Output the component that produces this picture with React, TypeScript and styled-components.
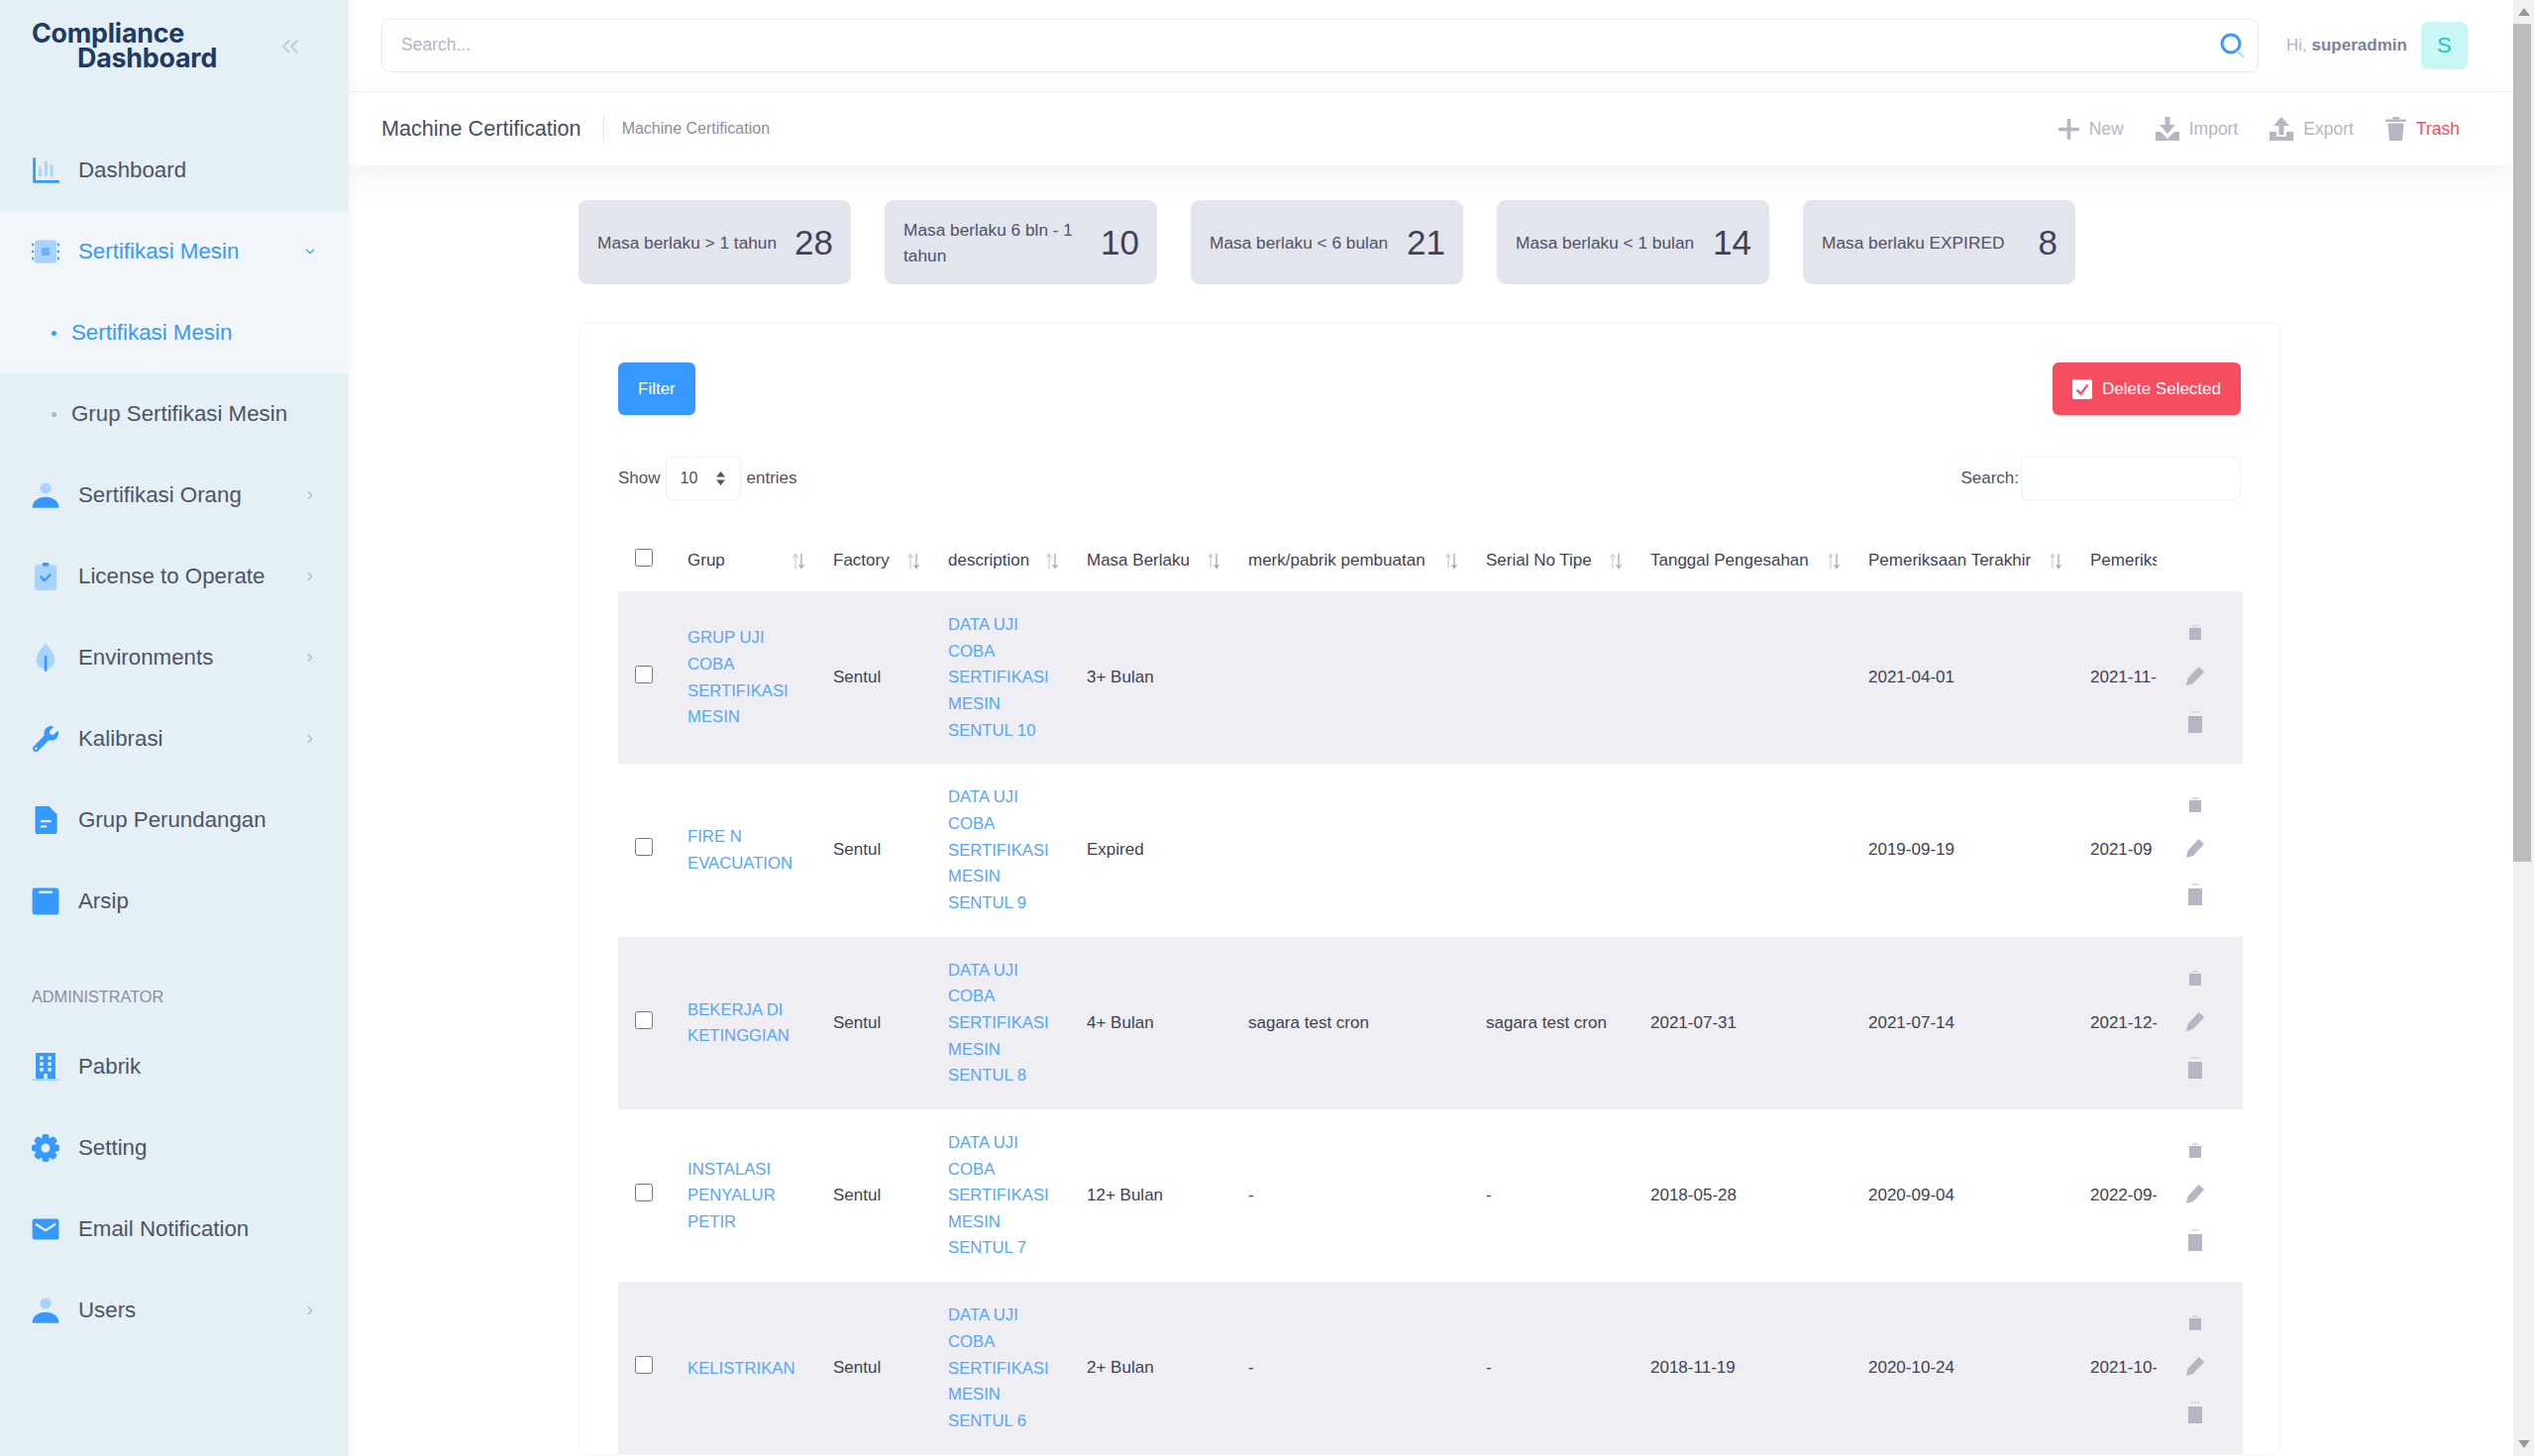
import styled, { createGlobalStyle } from "styled-components";
import { ChevronDown, ChevronRight, ChevronsLeft } from "lucide-react";
import { FaWrench } from "react-icons/fa";
import type { ReactNode } from "react";

const BLUE = "#3699ff";
const LIGHT = "#a9d3ff";
const MUTED = "#b5b5c3";

const GlobalStyle = createGlobalStyle`
  html, body {
    margin: 0;
    padding: 0;
    height: 100%;
    overflow: hidden;
    background: #fff;
    font-family: "Liberation Sans", Arial, sans-serif;
    color: #3f4254;
  }
  * { box-sizing: border-box; }
`;

const Svg = ({ children }: { children: ReactNode }) => (
  <svg width="28" height="28" viewBox="0 0 24 24" fill={BLUE}>
    {children}
  </svg>
);

const ChartIcon = () => (
  <Svg>
    <path d="M1 1h2.4v19.6H24V23H1z" />
    <rect x="6" y="9" width="2.6" height="8.5" rx="1" fill={LIGHT} />
    <rect x="11" y="4" width="2.6" height="13.5" rx="1" fill={LIGHT} />
    <rect x="16" y="7" width="2.6" height="10.5" rx="1" fill={LIGHT} />
  </Svg>
);

const ChipIcon = () => (
  <Svg>
    <rect x="2.5" y="2" width="19" height="20" rx="3" fill={LIGHT} />
    <rect x="8.5" y="8.5" width="7" height="7" rx="1" fill="#69b3ff" />
    {[5, 11, 17].map((y) => (
      <g key={y}>
        <rect x="0" y={y} width="1.8" height="2" rx="0.5" />
        <rect x="22.2" y={y} width="1.8" height="2" rx="0.5" />
      </g>
    ))}
  </Svg>
);

const PersonIcon = () => (
  <Svg>
    <circle cx="12" cy="6" r="4.8" fill={LIGHT} />
    <path d="M0.5 23c0-6 5-9.5 11.5-9.5S23.500 17 23.500 23z" />
  </Svg>
);

const ClipboardIcon = () => (
  <Svg>
    <rect x="2.500" y="2" width="19" height="22" rx="2.500" fill={LIGHT} />
    <rect x="9" y="0" width="6" height="3" rx="1.500" />
    <path d="M8 12.500l3 3 5-5" fill="none" stroke={BLUE} strokeWidth="2" strokeLinecap="round" strokeLinejoin="round" />
  </Svg>
);

const LeafIcon = () => (
  <Svg>
    <path d="M12 0C8 4 4 9 4 14a8 8 0 0 0 16 0c0-5-4-10-8-14z" fill={LIGHT} />
    <rect x="11" y="10" width="2.200" height="14" rx="1.100" />
  </Svg>
);

const DocIcon = () => (
  <Svg>
    <path d="M3 0h12l7 7v15a2 2 0 0 1-2 2H5a2 2 0 0 1-2-2z" />
    <rect x="7.500" y="12" width="9.500" height="2" rx="0.800" fill="#e4f0f6" />
    <rect x="7.500" y="16.500" width="5.500" height="2" rx="0.800" fill="#e4f0f6" />
  </Svg>
);

const ArchiveIcon = () => (
  <Svg>
    <rect x="0.500" y="0.500" width="23" height="23" rx="2" />
    <rect x="6" y="3" width="12" height="2.200" rx="1" fill="#e4f0f6" />
  </Svg>
);

const BuildingIcon = () => (
  <Svg>
    <rect x="3.500" y="0" width="17" height="22.500" rx="0.500" />
    <rect x="0.500" y="22.500" width="23" height="1.500" fill={LIGHT} />
    {[3, 8, 13].map((y) => (
      <g key={y} fill="#e4f0f6">
        <rect x="7" y={y} width="3" height="3" />
        <rect x="14" y={y} width="3" height="3" />
      </g>
    ))}
    <rect x="10.500" y="18" width="3" height="4.500" fill="#e4f0f6" />
  </Svg>
);

const GearIcon = () => (
  <Svg>
    {[0, 45, 90, 135].map((deg) => (
      <rect key={deg} x="9" y="0" width="6" height="24" rx="2" transform={`rotate(${deg} 12 12)`} />
    ))}
    <circle cx="12" cy="12" r="9" />
    <circle cx="12" cy="12" r="3.800" fill="#e4f0f6" />
  </Svg>
);

const MailIcon = () => (
  <Svg>
    <rect x="0.500" y="3" width="23" height="18" rx="2" />
    <path d="M4 8l8 5 8-5" fill="none" stroke="#e4f0f6" strokeWidth="2" strokeLinecap="round" strokeLinejoin="round" />
  </Svg>
);

const Sidebar = styled.aside`
  flex: 0 0 352px;
  height: 100vh;
  background: #e4f0f6;
  box-shadow: 2px 0 8px rgba(82, 63, 105, 0.06);
  position: relative;
  z-index: 2;
`;

const Brand = styled.div`
  height: 131px;
  padding: 21px 45px 0 32px;
  display: flex;
  justify-content: space-between;
`;

const Logo = styled.div`
  font-family: Inter, "Open Sans", sans-serif;
  font-weight: 700;
  font-size: 26.800px;
  line-height: 25px;
  letter-spacing: -0.200px;
  color: #1f3a63;
  span {
    display: block;
  }
  span + span {
    padding-left: 46px;
  }
`;

const Collapse = styled.div`
  color: #c4c6d2;
  padding-top: 12px;
  display: flex;
`;

const NavGroup = styled.div<{ $open?: boolean }>`
  background: ${(p) => (p.$open ? "#f2f6fa" : "transparent")};
`;

const NavRow = styled.div<{ $active?: boolean }>`
  height: 82px;
  padding: 0 32px;
  display: flex;
  align-items: center;
  font-size: 22.300px;
  color: ${(p) => (p.$active ? BLUE : "#4f5365")};
`;

const NavIcon = styled.span`
  flex: 0 0 28px;
  height: 28px;
  margin-right: 19px;
  display: flex;
  align-items: center;
  justify-content: center;
  color: ${BLUE};
`;

const NavLabel = styled.span`
  flex: 1;
`;

const NavArrow = styled.span<{ $active?: boolean }>`
  display: flex;
  color: ${(p) => (p.$active ? BLUE : MUTED)};
`;

const SubRow = styled(NavRow)`
  padding-left: 52px;
`;

const Dot = styled.span<{ $active?: boolean }>`
  width: 5px;
  height: 5px;
  border-radius: 50%;
  margin-right: 15px;
  background: ${(p) => (p.$active ? BLUE : MUTED)};
`;

const SectionTitle = styled.div`
  height: 85px;
  padding: 46px 32px 0;
  font-size: 16.300px;
  line-height: 18px;
  color: #8a8fa3;
`;

const Main = styled.main`
  flex: 1;
  min-width: 0;
  height: 100vh;
  overflow: hidden;
  background: #fff;
`;

const TopBar = styled.header`
  height: 93px;
  padding: 0 0 0 33px;
  display: flex;
  align-items: center;
  border-bottom: 1px solid #f3f3f7;
`;

const SearchBox = styled.div`
  width: 1895px;
  height: 54px;
  margin-top: -1px;
  padding: 0 14px 0 17px;
  display: flex;
  align-items: center;
  border: 1px solid #e7e9ef;
  border-radius: 8px;
`;

const SearchInput = styled.input`
  flex: 1;
  border: 0;
  outline: 0;
  font: 17.500px "Liberation Sans", Arial, sans-serif;
  color: #3f4254;
  &::placeholder {
    color: #b5b5c3;
  }
`;

const Greeting = styled.div`
  margin-left: 28px;
  font-size: 17px;
  color: ${MUTED};
  white-space: nowrap;
  b {
    color: #7e8299;
  }
`;

const Avatar = styled.div`
  width: 47px;
  height: 48px;
  margin-left: 14px;
  border-radius: 7px;
  background: #c9f7f5;
  color: #1bc5bd;
  font-size: 22px;
  display: flex;
  align-items: center;
  justify-content: center;
`;

const SubHeader = styled.div`
  height: 74px;
  padding: 0 54px 0 33px;
  display: flex;
  align-items: center;
  background: #fff;
  box-shadow: 0 10px 30px rgba(82, 63, 105, 0.08);
  position: relative;
  z-index: 1;
`;

const PageTitle = styled.h1`
  margin: 0;
  font-size: 21.600px;
  font-weight: 400;
  color: #464e5f;
`;

const Crumb = styled.span`
  margin-left: 22px;
  padding-left: 18px;
  height: 30px;
  line-height: 30px;
  border-left: 1px solid #e8e8ee;
  font-size: 16px;
  color: #8a8d9f;
`;

const Tools = styled.div`
  margin-left: auto;
  display: flex;
  align-items: center;
  gap: 32px;
`;

const Tool = styled.span<{ $danger?: boolean }>`
  display: flex;
  align-items: center;
  gap: 10px;
  font-size: 17.500px;
  color: ${MUTED};
  em {
    font-style: normal;
    color: ${(p) => (p.$danger ? "#f64e60" : MUTED)};
  }
`;

const Content = styled.div`
  padding: 35px 235px 0 232px;
`;

const Stats = styled.div`
  display: flex;
  gap: 34px;
`;

const StatCard = styled.div`
  flex: 0 0 275px;
  height: 85px;
  padding: 0 18px 0 19px;
  display: flex;
  align-items: center;
  gap: 12px;
  border-radius: 9px;
  background: #e3e5ee;
`;

const StatLabel = styled.span`
  flex: 1;
  font-size: 17.300px;
  line-height: 26px;
  color: #4f5365;
`;

const StatValue = styled.span`
  font-size: 35px;
  color: #3f4254;
`;

const Card = styled.section`
  margin-top: 38px;
  padding: 40px 39px 0;
  border: 1px solid #f3f3f8;
  border-radius: 8px;
  background: #fff;
`;

const ButtonRow = styled.div`
  display: flex;
  justify-content: space-between;
`;

const Button = styled.button<{ $danger?: boolean }>`
  height: 53px;
  padding: 0 20px;
  display: flex;
  align-items: center;
  gap: 10px;
  border: 0;
  border-radius: 6px;
  font: 17px "Liberation Sans", Arial, sans-serif;
  color: #fff;
  background: ${(p) => (p.$danger ? "#f64e60" : BLUE)};
`;

const ListBar = styled.div`
  margin-top: 42px;
  margin-bottom: 26px;
  display: flex;
  align-items: center;
  justify-content: space-between;
  font-size: 17px;
  color: #4f5365;
`;

const ListGroup = styled.div`
  display: flex;
  align-items: center;
`;

const EntrySelect = styled.div`
  width: 76px;
  height: 44px;
  margin: 0 6px 0 5px;
  padding: 0 14px;
  display: flex;
  align-items: center;
  justify-content: space-between;
  border: 1px solid #f0f0f5;
  border-radius: 6px;
  font-size: 16px;
`;

const FilterInput = styled.input`
  width: 222px;
  height: 44px;
  margin-left: 2px;
  border: 1px solid #f0f0f5;
  border-radius: 6px;
  outline: 0;
`;

const Table = styled.table`
  width: 1640px;
  table-layout: fixed;
  border-collapse: collapse;
  font-size: 17px;
`;

const Th = styled.th`
  height: 66px;
  padding: 4px 0 0;
  font-weight: 400;
  text-align: left;
  white-space: nowrap;
  overflow: hidden;
  color: #3f4254;
`;

const ThInner = styled.div`
  padding-right: 28px;
  display: flex;
  align-items: center;
  justify-content: space-between;
`;

const Tr = styled.tr<{ $shade: boolean }>`
  background: ${(p) => (p.$shade ? "#eeeef3" : "#fff")};
`;

const Td = styled.td`
  height: 174.300px;
  padding: 0;
  vertical-align: middle;
`;

const LinkTd = styled(Td)`
  padding-top: 1px;
  font-size: 16.700px;
  line-height: 26.600px;
  color: #55a6ff;
`;

const GrupTd = styled(LinkTd)`
  padding-right: 27px;
`;

const DescTd = styled(LinkTd)`
  padding-right: 20px;
`;

const ClipTd = styled(Td)`
  white-space: nowrap;
  overflow: hidden;
`;

const Check = styled.input`
  display: block;
  width: 18px;
  height: 18px;
  margin: 0 0 6px 17px;
`;

const RowActions = styled.div`
  width: 77px;
  padding: 3px 0 0 1px;
  display: flex;
  flex-direction: column;
  align-items: center;
  gap: 26px;
`;

const Scrollbar = styled.div`
  flex: 0 0 21px;
  height: 100vh;
  display: flex;
  flex-direction: column;
  background: #f1f1f1;
`;

const ScrollArrow = styled.div`
  height: 24px;
  display: flex;
  align-items: center;
  justify-content: center;
`;

const ScrollTrack = styled.div`
  flex: 1;
`;

const ScrollThumb = styled.div`
  height: 846px;
  margin-right: 3px;
  background: #bcbcbc;
`;

const Shell = styled.div`
  display: flex;
  height: 100vh;
  overflow: hidden;
`;

const SortIcon = () => (
  <svg width="14" height="17" viewBox="0 0 14 17" fill="none" strokeWidth="1.200">
    <path d="M4 16V2M1.500 5L4 1.500 6.500 5" stroke="#c9cad6" />
    <path d="M10 1v14M7.500 12L10 15.500 12.500 12" stroke="#9d9eae" />
  </svg>
);

const StepIcon = () => (
  <svg width="11" height="16" viewBox="0 0 11 16" fill="#4f5365">
    <path d="M5.500 1L10 6.500H1zM5.500 15L1 9.500h9z" />
  </svg>
);

const PlusIcon = () => (
  <svg width="21" height="21" viewBox="0 0 21 21" fill={MUTED}>
    <rect x="8.700" y="0" width="3.600" height="21" rx="1.200" />
    <rect x="0" y="8.700" width="21" height="3.600" rx="1.200" />
  </svg>
);

const ImportIcon = () => (
  <svg width="24" height="24" viewBox="0 0 24 24" fill={MUTED}>
    <path d="M9.500 0h5v8H20l-8 9-8-9h5.500z" />
    <path d="M0 15h5l7 7 7-7h5v9H0z" />
  </svg>
);

const ExportIcon = () => (
  <svg width="24" height="24" viewBox="0 0 24 24" fill={MUTED}>
    <path d="M12 0l8 9h-5.500v9h-5V9H4z" />
    <path d="M0 15h7v5h10v-5h7v9H0z" />
  </svg>
);

const TrashIcon = () => (
  <svg width="21" height="24" viewBox="0 0 21 24" fill={MUTED}>
    <rect x="0" y="2.500" width="21" height="2.500" rx="1" />
    <rect x="7" y="0" width="7" height="2.500" rx="1" />
    <path d="M2.500 6.500h16L17 24H4z" />
  </svg>
);

const RowTrashIcon = () => (
  <svg width="14" height="22" viewBox="0 0 14 22" fill={MUTED}>
    <rect x="3" y="0" width="8" height="1.500" fill="#d6d6df" />
    <rect x="0" y="5" width="14" height="17" />
  </svg>
);

const SmallDocIcon = () => (
  <svg width="12" height="15" viewBox="0 0 12 15" fill={MUTED}>
    <rect x="0" y="3" width="12" height="12" />
    <rect x="3" y="0" width="6" height="2" fill="#d6d6df" />
  </svg>
);

const PencilIcon = () => (
  <svg width="20" height="20" viewBox="0 0 20 20" fill={MUTED}>
    <path d="M13.500 1l5.500 5-11 12L1 20l1.500-7z" />
  </svg>
);

const SearchGlyph = () => (
  <svg width="24" height="26" viewBox="0 0 24 26" fill="none">
    <circle cx="11" cy="11" r="9" stroke={BLUE} strokeWidth="3" />
    <path d="M18 19l5 5" stroke="#bcdcff" strokeWidth="2.500" strokeLinecap="round" />
  </svg>
);

const CheckedBox = () => (
  <svg width="20" height="20" viewBox="0 0 20 20">
    <rect width="20" height="20" rx="2" fill="#fff" />
    <path d="M4.500 10.500l4 4 7-9" fill="none" stroke="#f64e60" strokeWidth="2.200" />
  </svg>
);

const menu: { label: string; icon: ReactNode; arrow?: boolean }[] = [
  { label: "Sertifikasi Orang", icon: <PersonIcon />, arrow: true },
  { label: "License to Operate", icon: <ClipboardIcon />, arrow: true },
  { label: "Environments", icon: <LeafIcon />, arrow: true },
  { label: "Kalibrasi", icon: <FaWrench size={26} />, arrow: true },
  { label: "Grup Perundangan", icon: <DocIcon /> },
  { label: "Arsip", icon: <ArchiveIcon /> },
];

const adminMenu: { label: string; icon: ReactNode; arrow?: boolean }[] = [
  { label: "Pabrik", icon: <BuildingIcon /> },
  { label: "Setting", icon: <GearIcon /> },
  { label: "Email Notification", icon: <MailIcon /> },
  { label: "Users", icon: <PersonIcon />, arrow: true },
];

const stats = [
  { label: "Masa berlaku > 1 tahun", value: 28 },
  { label: "Masa berlaku 6 bln - 1 tahun", value: 10 },
  { label: "Masa berlaku < 6 bulan", value: 21 },
  { label: "Masa berlaku < 1 bulan", value: 14 },
  { label: "Masa berlaku EXPIRED", value: 8 },
];

const columns = [
  { title: "Grup", width: 147 },
  { title: "Factory", width: 116 },
  { title: "description", width: 140 },
  { title: "Masa Berlaku", width: 163 },
  { title: "merk/pabrik pembuatan", width: 240 },
  { title: "Serial No Tipe", width: 166 },
  { title: "Tanggal Pengesahan", width: 220 },
  { title: "Pemeriksaan Terakhir", width: 224 },
];

const rows = [
  { grup: "GRUP UJI COBA SERTIFIKASI MESIN", no: 10, masa: "3+ Bulan", merk: "", serial: "", sah: "", last: "2021-04-01", next: "2021-11-" },
  { grup: "FIRE N EVACUATION", no: 9, masa: "Expired", merk: "", serial: "", sah: "", last: "2019-09-19", next: "2021-09" },
  { grup: "BEKERJA DI KETINGGIAN", no: 8, masa: "4+ Bulan", merk: "sagara test cron", serial: "sagara test cron", sah: "2021-07-31", last: "2021-07-14", next: "2021-12-" },
  { grup: "INSTALASI PENYALUR PETIR", no: 7, masa: "12+ Bulan", merk: "-", serial: "-", sah: "2018-05-28", last: "2020-09-04", next: "2022-09-" },
  { grup: "KELISTRIKAN", no: 6, masa: "2+ Bulan", merk: "-", serial: "-", sah: "2018-11-19", last: "2020-10-24", next: "2021-10-" },
];

const MenuRow = ({ label, icon, arrow }: { label: string; icon: ReactNode; arrow?: boolean }) => (
  <NavRow>
    <NavIcon>{icon}</NavIcon>
    <NavLabel>{label}</NavLabel>
    {arrow && (
      <NavArrow>
        <ChevronRight size={14} />
      </NavArrow>
    )}
  </NavRow>
);

const App = () => {
  return (
    <Shell>
      <GlobalStyle />
      <Sidebar>
        <Brand>
          <Logo>
            <span>Compliance</span>
            <span>Dashboard</span>
          </Logo>
          <Collapse>
            <ChevronsLeft size={28} strokeWidth={1.500} />
          </Collapse>
        </Brand>
        <MenuRow label="Dashboard" icon={<ChartIcon />} />
        <NavGroup $open>
          <NavRow $active>
            <NavIcon>
              <ChipIcon />
            </NavIcon>
            <NavLabel>Sertifikasi Mesin</NavLabel>
            <NavArrow $active>
              <ChevronDown size={14} />
            </NavArrow>
          </NavRow>
          <SubRow $active>
            <Dot $active />
            Sertifikasi Mesin
          </SubRow>
        </NavGroup>
        <SubRow>
          <Dot />
          Grup Sertifikasi Mesin
        </SubRow>
        {menu.map((item) => (
          <MenuRow key={item.label} {...item} />
        ))}
        <SectionTitle>ADMINISTRATOR</SectionTitle>
        {adminMenu.map((item) => (
          <MenuRow key={item.label} {...item} />
        ))}
      </Sidebar>

      <Main>
        <TopBar>
          <SearchBox>
            <SearchInput placeholder="Search..." />
            <SearchGlyph />
          </SearchBox>
          <Greeting>
            Hi, <b>superadmin</b>
          </Greeting>
          <Avatar>S</Avatar>
        </TopBar>

        <SubHeader>
          <PageTitle>Machine Certification</PageTitle>
          <Crumb>Machine Certification</Crumb>
          <Tools>
            <Tool>
              <PlusIcon />
              <em>New</em>
            </Tool>
            <Tool>
              <ImportIcon />
              <em>Import</em>
            </Tool>
            <Tool>
              <ExportIcon />
              <em>Export</em>
            </Tool>
            <Tool $danger>
              <TrashIcon />
              <em>Trash</em>
            </Tool>
          </Tools>
        </SubHeader>

        <Content>
          <Stats>
            {stats.map((s) => (
              <StatCard key={s.label}>
                <StatLabel>{s.label}</StatLabel>
                <StatValue>{s.value}</StatValue>
              </StatCard>
            ))}
          </Stats>

          <Card>
            <ButtonRow>
              <Button>Filter</Button>
              <Button $danger>
                <CheckedBox />
                Delete Selected
              </Button>
            </ButtonRow>

            <ListBar>
              <ListGroup>
                Show
                <EntrySelect>
                  10
                  <StepIcon />
                </EntrySelect>
                entries
              </ListGroup>
              <ListGroup>
                Search:
                <FilterInput />
              </ListGroup>
            </ListBar>

            <Table>
              <colgroup>
                <col width={70} />
                {columns.map((c) => (
                  <col key={c.title} width={c.width} />
                ))}
                <col width={67} />
                <col width={87} />
              </colgroup>
              <thead>
                <tr>
                  <Th>
                    <Check type="checkbox" />
                  </Th>
                  {columns.map((c) => (
                    <Th key={c.title}>
                      <ThInner>
                        {c.title}
                        <SortIcon />
                      </ThInner>
                    </Th>
                  ))}
                  <Th>Pemeriksaan</Th>
                  <Th />
                </tr>
              </thead>
              <tbody>
                {rows.map((r, i) => (
                  <Tr key={r.no} $shade={i % 2 === 0}>
                    <Td>
                      <Check type="checkbox" />
                    </Td>
                    <GrupTd>{r.grup}</GrupTd>
                    <Td>Sentul</Td>
                    <DescTd>{`DATA UJI COBA SERTIFIKASI MESIN SENTUL ${r.no}`}</DescTd>
                    <Td>{r.masa}</Td>
                    <Td>{r.merk}</Td>
                    <Td>{r.serial}</Td>
                    <Td>{r.sah}</Td>
                    <Td>{r.last}</Td>
                    <ClipTd>{r.next}</ClipTd>
                    <Td>
                      <RowActions>
                        <SmallDocIcon />
                        <PencilIcon />
                        <RowTrashIcon />
                      </RowActions>
                    </Td>
                  </Tr>
                ))}
              </tbody>
            </Table>
          </Card>
        </Content>
      </Main>

      <Scrollbar>
        <ScrollArrow>
          <svg width="12" height="8" viewBox="0 0 12 8" fill="#9a9a9a">
            <path d="M6 0l6 8H0z" />
          </svg>
        </ScrollArrow>
        <ScrollThumb />
        <ScrollTrack />
        <ScrollArrow>
          <svg width="12" height="8" viewBox="0 0 12 8" fill="#9a9a9a">
            <path d="M6 8L0 0h12z" />
          </svg>
        </ScrollArrow>
      </Scrollbar>
    </Shell>
  );
};

export default App;
